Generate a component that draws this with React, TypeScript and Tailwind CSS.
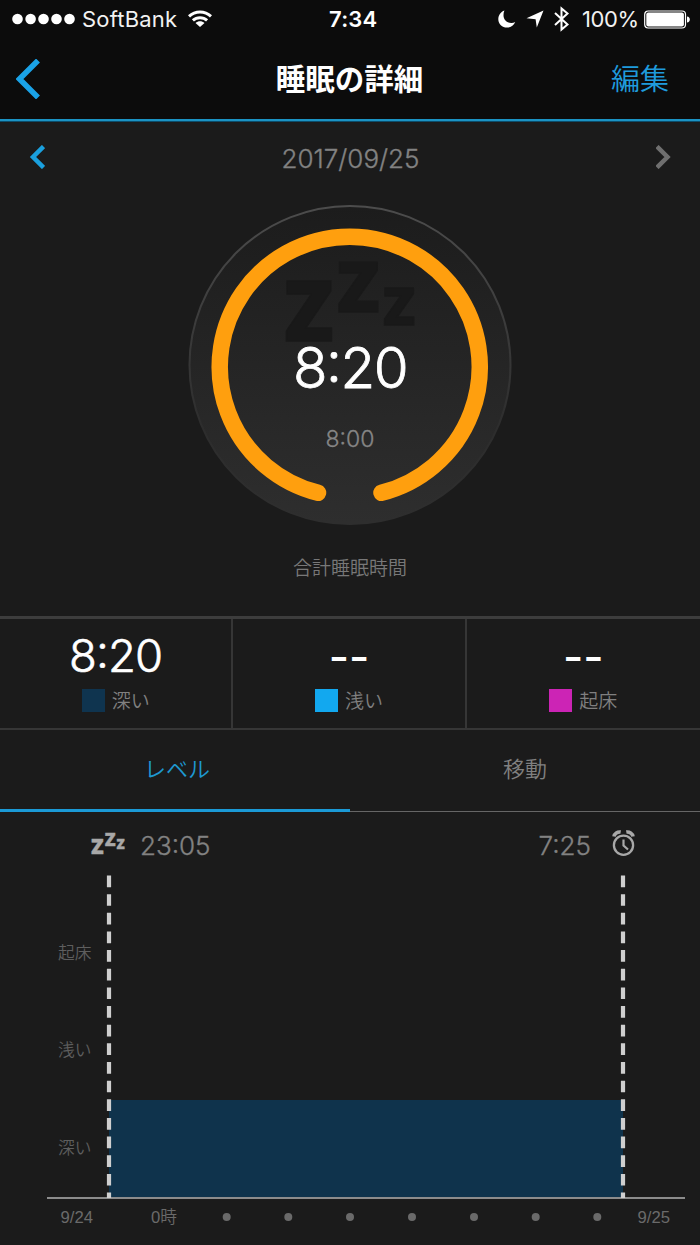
import clsx from "clsx";

const stats = [
  { label: "深い", value: "8:20", swatch: "bg-[#0f344f]" },
  { label: "浅い", value: "--", swatch: "bg-[#12a8ef]" },
  { label: "起床", value: "--", swatch: "bg-[#cc24b5]" },
];

const levels = [
  { label: "起床", y: 84.5 },
  { label: "浅い", y: 182 },
  { label: "深い", y: 280 },
];

const hourDots = [226.7, 288.3, 350, 412, 474, 535.7, 597.3];

function SleepIcon({ className }: { className: string }) {
  return (
    <svg
      viewBox="0 0 130 82"
      className={clsx("overflow-visible font-['Open_Sans',sans-serif] font-extrabold", className)}
      fill="currentColor"
      stroke="currentColor"
      strokeWidth="1.5"
    >
      <text x="-1" y="80" fontSize="84" textLength="49.500" lengthAdjust="spacingAndGlyphs">Z</text>
      <text x="52" y="50.500" fontSize="69.500" textLength="42.500" lengthAdjust="spacingAndGlyphs">Z</text>
      <text x="98" y="64" fontSize="51.500" textLength="32" lengthAdjust="spacingAndGlyphs">Z</text>
    </svg>
  );
}

function Chevron({ className, d, stroke }: { className: string; d: string; stroke: number }) {
  return (
    <svg className={className} fill="none" stroke="currentColor" strokeWidth={stroke}>
      <path d={d} />
    </svg>
  );
}

function StatusBar() {
  return (
    <div className="flex h-[38px] items-center text-[22px] text-[#f2f2f2]">
      <div className="flex w-[329px] items-center pl-3">
        <svg className="h-3 w-[63px]" fill="white">
          {[5.5, 18.6, 31.5, 44.5, 57.5].map((cx) => (
            <circle key={cx} cx={cx} cy="6" r="5.3" />
          ))}
        </svg>
        <span className="ml-[7px] w-[95px] tracking-[0.2px]">SoftBank</span>
        <svg className="ml-[11px] h-[18px] w-6" fill="none" stroke="white" strokeWidth="3">
          <path d="M1 6.4C7.2 .4 16.800 .4 23 6.400" />
          <path d="M4.900 10.400C8.900 6.700 15.100 6.700 19.100 10.400" />
          <path d="M12 17L7.500 12.900C10 10.800 14 10.800 16.500 12.900Z" fill="white" stroke="none" />
        </svg>
      </div>
      <span className="w-[169px] font-semibold tracking-[0.2px] text-white">7:34</span>
      <svg className="h-[18px] w-[18px]" fill="white">
        <path d="M6.400 .5C3 1.800 .3 5.200 .3 9.200C.3 14.100 4.200 17.500 9 17.500C12.600 17.500 16 15.200 17.200 11.900C15.700 12.700 14.500 13 13.200 12.900C8.600 12.700 5.500 9.400 5.500 5.200C5.500 3.500 5.700 1.900 6.400 .5Z" />
      </svg>
      <svg className="ml-[10px] h-[18px] w-[18px]" fill="white">
        <path d="M17.500 .5L10.800 17.500L9.600 9.300L.5 8.200Z" />
      </svg>
      <svg className="ml-[10px] h-[26px] w-4" fill="none" stroke="white" strokeWidth="2">
        <path d="M1 7L13.500 18.500L7.500 23.500V2.500L13.500 7.500L1 19" />
      </svg>
      <span className="ml-[12px] w-[57px] tracking-[-0.4px]">100%</span>
      <svg className="ml-[5px] h-[19px] w-[47px]">
        <rect x=".7" y="1" width="40.800" height="17" rx="3.500" fill="none" stroke="white" strokeWidth="1.200" />
        <rect x="2.300" y="2.600" width="37.600" height="13.800" rx="2" fill="white" />
        <path d="M43 6.500C46.800 6.700 46.800 12.300 43 12.500Z" fill="white" />
      </svg>
    </div>
  );
}

function Header() {
  return (
    <header className="h-[122px] border-b border-[#0c4d6b] bg-[#0c0c0c]">
      <div className="h-[121px] border-b-2 border-[#1b93c4]">
        <StatusBar />
        <div className="grid h-[81px] grid-cols-3 items-center pr-[31px] pl-4">
          <Chevron className="h-10 w-6 text-[#1aa3e8]" d="M22 1.500L3.500 20L22 38.500" stroke={5.5} />
          <h1 className="mt-px ml-[14px] text-center text-[29.500px] font-bold whitespace-nowrap text-white">睡眠の詳細</h1>
          <span className="mt-[3px] text-right text-[29px] font-[350] text-[#1f9bdc]">編集</span>
        </div>
      </div>
    </header>
  );
}

function SleepDial() {
  return (
    <div className="relative h-[322px] w-[326px]">
      <svg className="h-[322px] w-[326px]" fill="none">
        <defs>
          <linearGradient id="dial" x1="0" y1="0" x2="0" y2="1">
            <stop offset="0" stopColor="#1c1c1c" />
            <stop offset="1" stopColor="#2e2e2e" />
          </linearGradient>
          <linearGradient id="rim" x1="0" y1="0" x2="0" y2="1">
            <stop offset="0" stopColor="#4c4c4c" />
            <stop offset="0.7" stopColor="#2d2d2d" />
            <stop offset="1" stopColor="#2e2e2e" />
          </linearGradient>
        </defs>
        <ellipse cx="163" cy="161" rx="160.500" ry="159" fill="url(#dial)" stroke="url(#rim)" strokeWidth="2" />
        <path d="M131 288.800A130 130 0 1 1 194.500 288.800" stroke="#ff9f0e" strokeWidth="16.500" strokeLinecap="round" />
      </svg>
      <div className="absolute inset-0 flex flex-col items-center font-light [font-feature-settings:'case']">
        <SleepIcon className="mt-[57px] h-[82px] w-[130px] text-[#191919]" />
        <span className="-mt-[10px] text-[56.500px] leading-[70px] tracking-[-1.500px] text-white [-webkit-text-stroke:0.8px]">8:20</span>
        <span className="mt-[21px] text-[23px] leading-[30px] text-[#858585] [-webkit-text-stroke:0.3px]">8:00</span>
      </div>
    </div>
  );
}

function LevelChart() {
  return (
    <svg className="block h-[376px] w-[700px] font-[350]" fontSize="16.700">
      <rect x="109" y="231" width="514" height="98" fill="#0f334c" />
      <path d="M47 329H685" stroke="#8c8c8c" strokeWidth="2" />
      <path d="M109 6.500V329M623 6.500V329" stroke="#cfcfcf" strokeWidth="4.200" strokeDasharray="11.700 6.950" />
      <g fill="#5e5e5e">
        {levels.map((level) => (
          <text key={level.label} x="58" y={level.y + 5}>{level.label}</text>
        ))}
      </g>
      <g fill="#6a6a6a" className="font-['Liberation_Sans','Noto_Sans_CJK_JP',sans-serif]">
        <text x="60.500" y="354">9/24</text>
        <text x="151" y="354">0時</text>
        <text x="637.500" y="354">9/25</text>
        {hourDots.map((cx) => (
          <circle key={cx} cx={cx} cy="348" r="4" />
        ))}
      </g>
    </svg>
  );
}

export default function App() {
  return (
    <div className="h-[1245px] w-[700px] overflow-hidden bg-[#1b1b1b] font-[Inter,'Noto_Sans_CJK_JP',sans-serif]">
      <Header />

      <div className="flex h-[71px] items-center justify-between pr-7 pl-[29px]">
        <Chevron className="mb-0.5 h-6 w-4 text-[#1aa0de]" d="M14.500 1.500L4 12L14.500 22.500" stroke={4.5} />
        <span className="pt-px text-[26px] font-light text-[#828282] [-webkit-text-stroke:0.35px]">2017/09/25</span>
        <Chevron className="mb-0.5 h-6 w-4 text-[#6f6f6f]" d="M1 1.500L11.500 12L1 22.500" stroke={4.5} />
      </div>

      <div className="flex h-[423px] flex-col items-center pt-[11px]">
        <SleepDial />
        <p className="mt-[29px] text-[19px] leading-[28px] font-[350] text-[#787878]">合計睡眠時間</p>
      </div>

      <div className="grid h-[114px] grid-cols-3 border-t-3 border-b-2 border-t-[#3d3d3d] border-b-[#363636]">
        {stats.map((stat, i) => (
          <div key={stat.label} className={clsx("flex flex-col items-center", i < 2 && "border-r-2 border-[#363636]")}>
            <span
              className={clsx(
                "h-[70px] text-white",
                stat.value === "--"
                  ? "text-[44px] leading-[76px] font-medium"
                  : "text-[45.500px] leading-[74px] font-light tracking-[-0.800px] [-webkit-text-stroke:0.6px] [font-feature-settings:'case']"
              )}
            >
              {stat.value}
            </span>
            <div className="flex h-[23px] gap-[7px]">
              <span className={clsx("size-[23px]", stat.swatch)} />
              <span className="text-[19px] leading-[26px] font-[350] text-[#808080]">{stat.label}</span>
            </div>
          </div>
        ))}
      </div>

      <div className="grid h-[82px] grid-cols-2 text-[22px] font-[350]">
        <div className="flex items-center justify-center border-b-3 border-[#1b9ad6] pl-1 text-[#1e98d0]">レベル</div>
        <div className="flex items-center justify-center border-b border-[#666] pb-0.5 text-[#808080]">移動</div>
      </div>

      <div className="flex h-[57px] items-center justify-between pt-2.5 pr-16 pl-[91px] text-[26px] font-light text-[#828282]">
        <div className="flex items-center gap-[15px]">
          <SleepIcon className="mb-1 h-[21px] w-[34px] text-[#a8a8a8]" />
          <span className="[-webkit-text-stroke:0.35px] [font-feature-settings:'case']">23:05</span>
        </div>
        <div className="flex items-center gap-[21px]">
          <span className="[-webkit-text-stroke:0.35px] [font-feature-settings:'case']">7:25</span>
          <svg className="mb-1 h-[27px] w-6 text-[#a8a8a8]" fill="none" stroke="currentColor">
            <circle cx="11.500" cy="15.200" r="9.600" strokeWidth="2.300" />
            <path d="M11.500 9.500V15.500L16 19.500" strokeWidth="2.200" />
            <path d="M2 6.500C2.500 3.500 5.500 1.500 8.700 2.100M21 6.500C20.500 3.500 17.500 1.500 14.300 2.100" strokeWidth="3.600" />
          </svg>
        </div>
      </div>

      <LevelChart />
    </div>
  );
}
